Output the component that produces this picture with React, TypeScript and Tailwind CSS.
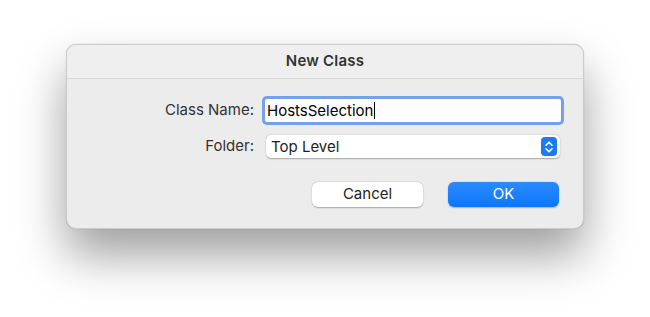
import React from 'react';

const font = { fontFamily: 'Inter, "Noto Sans", sans-serif' };

function Stepper() {
  return (
    <div className="w-[16px] h-[19px] rounded-[4px] bg-[#1a7cf5] flex items-center justify-center">
      <svg width="10" height="14" viewBox="0 0 10 14" fill="none" stroke="white" strokeWidth={1.6} strokeLinecap="round" strokeLinejoin="round">
        <path d="M2 5.2L5 2.2L8 5.2" />
        <path d="M2 8.8L5 11.8L8 8.8" />
      </svg>
    </div>
  );
}

export default function App() {
  return (
    <div className="w-[650px] h-[317px] bg-white flex justify-center pt-[44px]" style={font}>
      <div className="w-[518px] h-[185px] rounded-[10px] bg-[#ececec] border border-[#cbcbcb] shadow-[0_26px_48px_rgba(0,0,0,0.38),0_0_1px_rgba(0,0,0,0.3)] flex flex-col overflow-hidden">
        <div className="h-[34px] shrink-0 bg-[#efefef] border-b border-[#d8d8d8] flex items-center justify-center">
          <span className="text-[15px] font-semibold text-[#333333] tracking-[0.2px]">New Class</span>
        </div>

        <div className="flex flex-col pt-[20px]">
          <div className="flex items-center h-[23px]">
            <div className="w-[187px] text-right text-[15px] text-[#333333]">Class Name:</div>
            <div className="ml-[11px] w-[296px] h-[23px] bg-white ring-[3px] ring-[#74a2ea] rounded-[2px] flex items-center px-[2px]">
              <span className="text-[15px] text-black leading-none">HostsSelection</span>
              <span className="w-[1px] h-[17px] bg-black ml-[1px]" />
            </div>
          </div>

          <div className="flex items-center h-[23px] mt-[13px]">
            <div className="w-[187px] text-right text-[15px] text-[#333333]">Folder:</div>
            <div className="ml-[12px] w-[294px] h-[23px] bg-white rounded-[5px] shadow-[0_0.5px_1.5px_rgba(0,0,0,0.3)] flex items-center justify-between pl-[5px] pr-[3px]">
              <span className="text-[15px] text-[#1e1e1e] leading-none">Top Level</span>
              <Stepper />
            </div>
          </div>

          <div className="flex justify-end gap-[25px] mt-[24px] pr-[24px]">
            <button className="w-[111px] h-[25px] rounded-[6px] bg-white shadow-[0_0.5px_1.5px_rgba(0,0,0,0.3)] text-[15px] text-[#1e1e1e] flex items-center justify-center">
              Cancel
            </button>
            <button className="w-[111px] h-[25px] rounded-[6px] bg-gradient-to-b from-[#2a8bff] to-[#0a76fb] shadow-[0_0.5px_1.5px_rgba(0,0,0,0.25)] text-[15px] text-white flex items-center justify-center">
              OK
            </button>
          </div>
        </div>
      </div>
    </div>
  );
}
